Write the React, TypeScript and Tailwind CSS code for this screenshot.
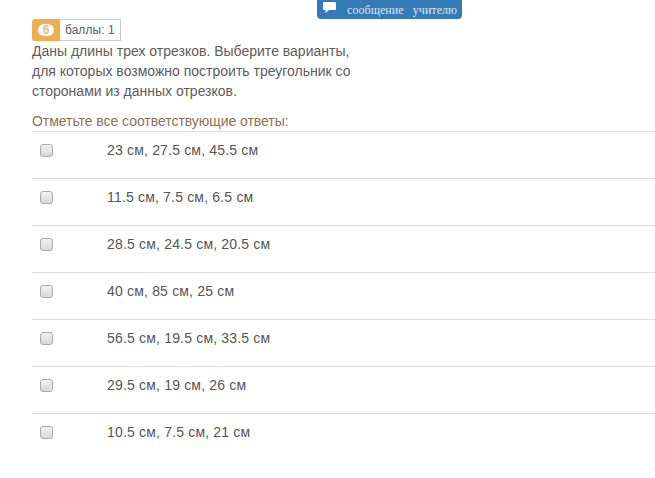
const answers = [
  "23 см, 27.5 см, 45.5 см",
  "11.5 см, 7.5 см, 6.5 см",
  "28.5 см, 24.5 см, 20.5 см",
  "40 см, 85 см, 25 см",
  "56.5 см, 19.5 см, 33.5 см",
  "29.5 см, 19 см, 26 см",
  "10.5 см, 7.5 см, 21 см",
];

export default function App() {
  return (
    <div className="relative h-[478px] w-[655px] overflow-hidden bg-white pl-8 pt-[19px] font-['Liberation_Sans',Arial,sans-serif] text-[14px] text-[#5c5c5c]">
      {/* message button, cut off by the top edge */}
      <div className="absolute left-[317px] top-0 flex h-[19px] w-[145px] items-center rounded-b-[4px] bg-[#337ab7] pl-[6px] font-['Liberation_Serif',serif] text-[12px] text-[#dbe8f3]">
        <svg width="13" height="12" viewBox="0 0 13 12" className="mb-[3px]">
          <path d="M1 0h11a1 1 0 0 1 1 1v6a1 1 0 0 1-1 1H6l-3.5 3V8H1a1 1 0 0 1-1-1V1a1 1 0 0 1 1-1z" fill="#fff" />
        </svg>
        <span className="ml-[11px] whitespace-pre tracking-[0.05px]">сообщение   учителю</span>
      </div>

      <div className="flex h-[22px] w-fit">
        <div className="flex w-[28px] items-center justify-center rounded-l-[3px] bg-[#f0ad4e]">
          <span className="flex h-[12px] w-[16px] items-center justify-center rounded-full bg-white text-[12px] font-bold leading-none text-[#e6bc85]">6</span>
        </div>
        <div className="flex items-center border border-l-0 border-[#ccc] pl-[5px] pr-[5px] text-[12px] tracking-[0.05px] text-[#5c5c5c]">баллы: 1</div>
      </div>

      <p className="w-[330px] leading-[20px]">
        Даны длины трех отрезков. Выберите варианты, для которых возможно построить треугольник со сторонами из данных отрезков.
      </p>

      <div className="mt-[10px] leading-[20px] tracking-[-0.05px] text-[#8a7255]">Отметьте все соответствующие ответы:</div>

      <div>
        {answers.map((a) => (
          <div key={a} className="flex h-[47px] items-start border-t border-[#ddd] pt-[8px]">
            <span className="ml-2 mt-[4px] h-[13px] w-[13px] rounded-[3px] border border-[#aaa] bg-[linear-gradient(#f2f2f2,#d8d8d8)]" />
            <span className="ml-[54px] leading-[20px] tracking-[0.18px] text-[#555]">{a}</span>
          </div>
        ))}
      </div>
    </div>
  );
}
